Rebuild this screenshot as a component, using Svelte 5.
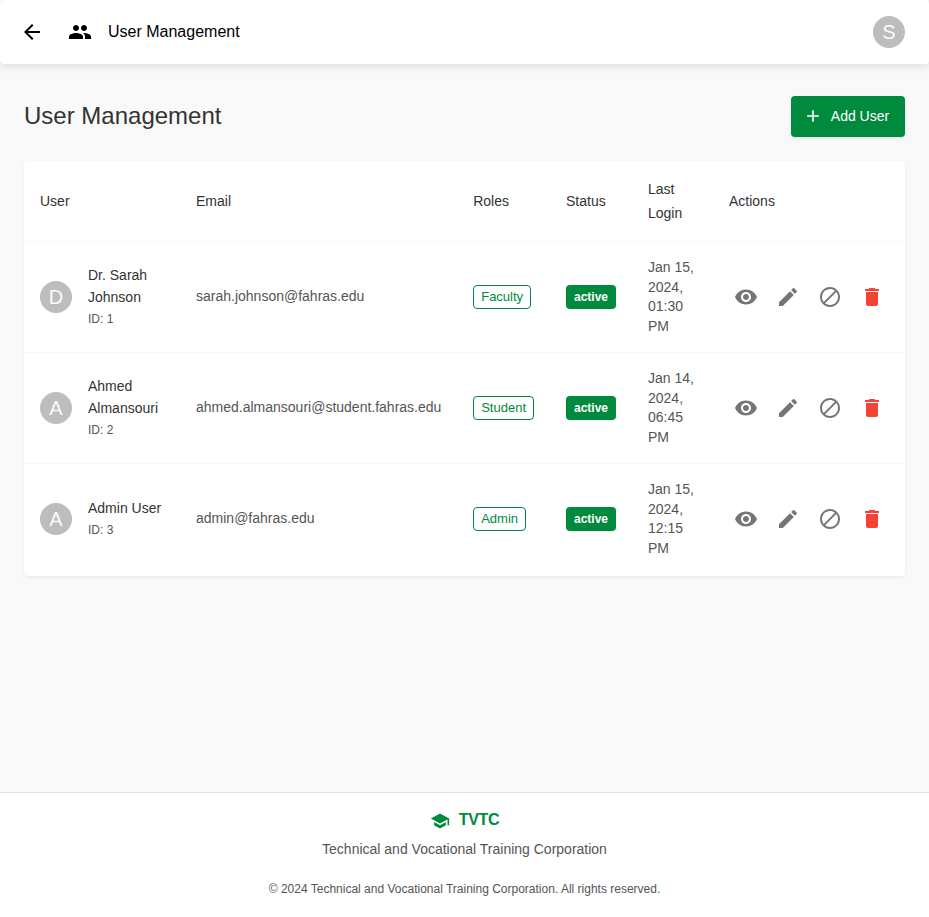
<script>
  const icons = {
    back: 'M20 11H7.83l5.59-5.59L12 4l-8 8 8 8 1.41-1.41L7.83 13H20v-2z',
    people: 'M16 11c1.66 0 2.99-1.34 2.99-3S17.66 5 16 5c-1.66 0-3 1.34-3 3s1.34 3 3 3zm-8 0c1.66 0 2.99-1.34 2.99-3S9.66 5 8 5C6.34 5 5 6.34 5 8s1.34 3 3 3zm0 2c-2.33 0-7 1.17-7 3.5V19h14v-2.5c0-2.33-4.67-3.5-7-3.5zm8 0c-.29 0-.62.02-.97.05 1.16.84 1.97 1.97 1.97 3.45V19h6v-2.5c0-2.33-4.67-3.5-7-3.5z',
    add: 'M19 13h-6v6h-2v-6H5v-2h6V5h2v6h6v2z',
    view: 'M12 4.5C7 4.5 2.73 7.61 1 12c1.73 4.39 6 7.5 11 7.5s9.27-3.11 11-7.5c-1.73-4.39-6-7.5-11-7.5zM12 17c-2.76 0-5-2.24-5-5s2.24-5 5-5 5 2.24 5 5-2.24 5-5 5zm0-8c-1.66 0-3 1.34-3 3s1.34 3 3 3 3-1.34 3-3-1.34-3-3-3z',
    edit: 'M3 17.25V21h3.75L17.81 9.94l-3.75-3.75L3 17.25zM20.71 7.04c.39-.39.39-1.02 0-1.41l-2.34-2.34a.9959.9959 0 0 0-1.41 0l-1.83 1.83 3.75 3.75 1.83-1.83z',
    block: 'M12 2C6.48 2 2 6.48 2 12s4.48 10 10 10 10-4.48 10-10S17.52 2 12 2zM4 12c0-4.42 3.58-8 8-8 1.85 0 3.55.63 4.9 1.69L5.69 16.9C4.63 15.55 4 13.85 4 12zm8 8c-1.85 0-3.55-.63-4.9-1.69L18.31 7.1C19.37 8.45 20 10.15 20 12c0 4.42-3.58 8-8 8z',
    remove: 'M6 19c0 1.1.9 2 2 2h8c1.1 0 2-.9 2-2V7H6v12zM19 4h-3.5l-1-1h-5l-1 1H5v2h14V4z',
    school: 'M5 13.18v4L12 21l7-3.82v-4L12 17l-7-3.82zM12 3 1 9l11 6 9-4.91V17h2V9L12 3z'
  };

  const users = [
    { id: 1, name: 'Dr. Sarah Johnson', email: 'sarah.johnson@fahras.edu', role: 'Faculty', status: 'active', login: 'Jan 15, 2024, 01:30 PM' },
    { id: 2, name: 'Ahmed Almansouri', email: 'ahmed.almansouri@student.fahras.edu', role: 'Student', status: 'active', login: 'Jan 14, 2024, 06:45 PM' },
    { id: 3, name: 'Admin User', email: 'admin@fahras.edu', role: 'Admin', status: 'active', login: 'Jan 15, 2024, 12:15 PM' }
  ];

  const actions = [
    { icon: 'view', label: 'View' },
    { icon: 'edit', label: 'Edit' },
    { icon: 'block', label: 'Suspend' },
    { icon: 'remove', label: 'Delete' }
  ];
</script>

{#snippet icon(name)}
  <svg class="icon" viewBox="0 0 24 24" aria-hidden="true"><path d={icons[name]} /></svg>
{/snippet}

<div class="page">
  <header>
    <button class="back" aria-label="Back">{@render icon('back')}</button>
    <span class="section">{@render icon('people')}</span>
    <span class="bar-title">User Management</span>
    <span class="avatar">S</span>
  </header>

  <main>
    <div class="heading">
      <h1>User Management</h1>
      <button class="add">{@render icon('add')}<span>Add User</span></button>
    </div>

    <div class="card">
      <table>
        <colgroup>
          <col class="c-user" /><col class="c-email" /><col class="c-role" />
          <col class="c-status" /><col class="c-login" /><col />
        </colgroup>
        <thead>
          <tr>
            <th>User</th><th>Email</th><th>Roles</th><th>Status</th><th>Last Login</th><th>Actions</th>
          </tr>
        </thead>
        <tbody>
          {#each users as user (user.id)}
            <tr>
              <td>
                <div class="user">
                  <span class="avatar">{user.name[0]}</span>
                  <div class="who">
                    <div class="name">{user.name}</div>
                    <div class="uid">ID: {user.id}</div>
                  </div>
                </div>
              </td>
              <td><div class="text">{user.email}</div></td>
              <td><span class="chip outlined">{user.role}</span></td>
              <td><span class="chip filled">{user.status}</span></td>
              <td><div class="text">{user.login}</div></td>
              <td>
                <div class="actions">
                  {#each actions as action}
                    <button class:danger={action.icon === 'remove'} aria-label={action.label}>{@render icon(action.icon)}</button>
                  {/each}
                </div>
              </td>
            </tr>
          {/each}
        </tbody>
      </table>
    </div>
  </main>

  <footer>
    <div class="brand">{@render icon('school')}<span>TVTC</span></div>
    <div class="org">Technical and Vocational Training Corporation</div>
    <div class="copy">© 2024 Technical and Vocational Training Corporation. All rights reserved.</div>
  </footer>
</div>

<style>
  :global(body) { margin: 0; background: #f9f9f9; }
  .page {
    box-sizing: border-box;
    height: 917px;
    display: flex;
    flex-direction: column;
    background: #f9f9f9;
    color: #333;
    font-family: "Liberation Sans", Arial, sans-serif;
    font-size: 14px;
  }
  button {
    border: 0;
    padding: 0;
    background: none;
    font: inherit;
    color: inherit;
    display: flex;
    align-items: center;
    justify-content: center;
  }
  .icon { width: 24px; height: 24px; fill: currentColor; display: block; flex: none; }
  header {
    height: 64px;
    box-sizing: border-box;
    flex: none;
    padding: 0 24px;
    display: flex;
    align-items: center;
    background: #fff;
    color: #000;
    border-radius: 4px;
    box-shadow: 0 2px 8px rgba(0, 0, 0, 0.12);
  }
  .back { margin-left: -4px; }
  .section { margin-left: 24px; }
  .bar-title { margin-left: 16px; font-size: 16px; line-height: 24px; padding-bottom: 1px; flex: 1; }
  .avatar {
    width: 32px;
    height: 32px;
    flex: none;
    border-radius: 50%;
    background: #bdbdbd;
    color: #fafafa;
    font-size: 20px;
    line-height: 32px;
    text-align: center;
  }
  main { flex: 1; padding: 32px 24px 0; }
  .heading { display: flex; justify-content: space-between; align-items: center; margin-bottom: 24px; }
  h1 { margin: 0; padding-bottom: 2px; font-size: 24px; line-height: 32px; font-weight: 400; }
  .add {
    box-sizing: border-box;
    width: 114px;
    height: 41px;
    padding: 0 4px 1px 0;
    gap: 8px;
    border-radius: 4px;
    background: #008a3e;
    color: #fff;
    box-shadow: 0 1px 3px rgba(0, 0, 0, 0.1);
  }
  .add .icon { width: 20px; height: 20px; }
  .card { padding-bottom: 1px; background: #fff; border-radius: 4px; box-shadow: 0 2px 4px rgba(0, 0, 0, 0.06); }
  table { width: 100%; table-layout: fixed; border-collapse: separate; border-spacing: 0; }
  .c-user { width: 156px; }
  .c-email { width: 277.2px; }
  .c-role { width: 92.8px; }
  .c-status { width: 82px; }
  .c-login { width: 81px; }
  th, td {
    padding: 16px;
    text-align: left;
    vertical-align: middle;
    border-bottom: 1px solid #f9f9f9;
  }
  th { font-weight: 400; line-height: 24px; }
  tbody tr:last-child td { border-bottom-color: transparent; }
  .user { display: flex; align-items: center; gap: 16px; }
  .who { min-width: 0; }
  .name { line-height: 22px; }
  .uid { font-size: 12px; line-height: 22px; color: #555; }
  .text { line-height: 19.5px; color: #555; }
  .chip {
    display: inline-block;
    vertical-align: middle;
    height: 24px;
    box-sizing: border-box;
    border-radius: 4px;
    padding: 0 8px;
    font-size: 13px;
    line-height: 24px;
  }
  .outlined { border: 1px solid #008a3e; color: #008a3e; padding: 0 7px; line-height: 22px; }
  .filled { width: 50px; background: #008a3e; color: #fff; font-size: 12px; font-weight: 700; }
  .actions { display: flex; gap: 8px; color: #757575; }
  .actions button { width: 34px; height: 34px; flex: none; }
  .actions .danger { color: #f44336; }
  footer {
    height: 125px;
    box-sizing: border-box;
    flex: none;
    border-top: 1px solid #e0e0e0;
    background: #fff;
    color: #555;
    padding-top: 16px;
    text-align: center;
  }
  .brand {
    display: flex;
    justify-content: center;
    align-items: center;
    gap: 9px;
    height: 22px;
    color: #008a3e;
    font-size: 16px;
    font-weight: 700;
  }
  .brand span { letter-spacing: -0.3px; }
  .brand .icon { width: 20px; height: 20px; margin-top: 2px; }
  .org { margin-top: 7px; line-height: 22px; }
  .copy { margin-top: 19px; font-size: 12px; line-height: 20px; }
</style>
